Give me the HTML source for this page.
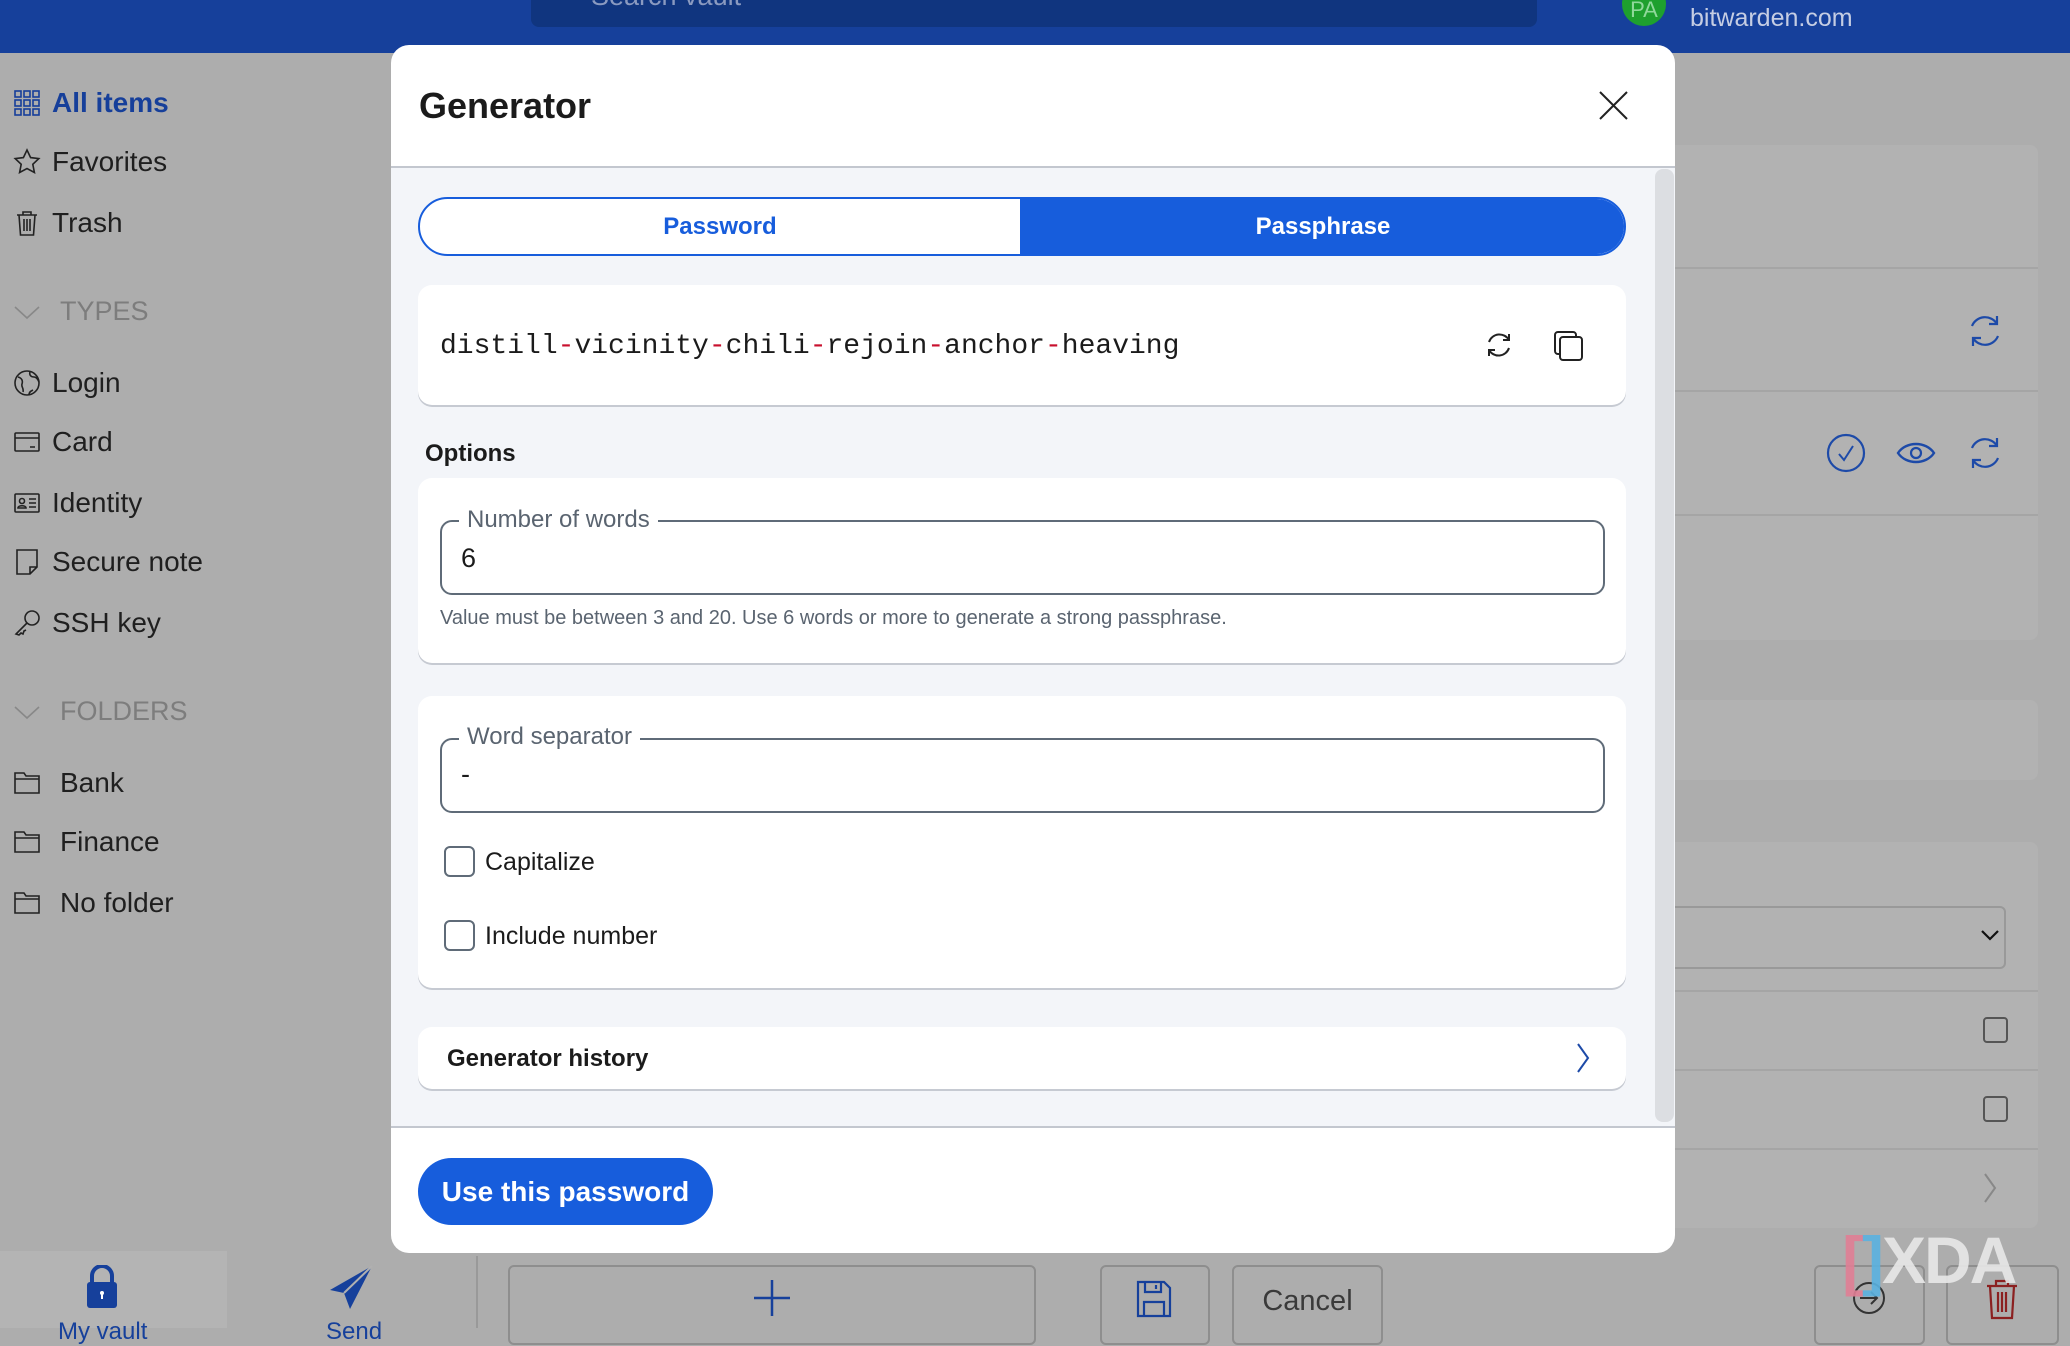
<!DOCTYPE html>
<html><head><meta charset="utf-8"><style>
*{box-sizing:border-box;margin:0;padding:0}
body{width:2070px;height:1328px;overflow:hidden;background:#adadad;font-family:"Liberation Sans",sans-serif;position:relative;color:#1b1b1b}
.a{position:absolute}
.nav{font-size:28px;color:#1f1f1f;display:flex;align-items:center;height:40px;left:12px}
.nav svg{width:30px;height:30px;margin-right:10px;fill:none;stroke:#222;stroke-width:1.6}
.sec{font-size:27px;color:#7d7d7d;left:12px;display:flex;align-items:center}
.card{background:#fff;border-radius:14px;box-shadow:0 2px 0 #c6cad2}
.field{border:2px solid #5f6b78;border-radius:12px;background:#fff}
.lbl{background:#fff;padding:0 8px;font-size:24px;color:#5a6470}
.gc{background:#b2b2b2;border-radius:8px}
.ln{height:2px;background:#a5a5a5}
</style></head><body>
<!-- header -->
<div class="a" style="left:0;top:0;width:2070px;height:53px;background:#16409b"></div>
<div class="a" style="left:531px;top:-10px;width:1006px;height:37px;background:#10357f;border-radius:8px;color:#8a9ac0;font-size:27px;padding-left:60px;line-height:12px">Search vault</div>
<div class="a" style="left:1622px;top:-18px;width:44px;height:44px;border-radius:50%;background:#1ea02e;color:#8fd89a;font-size:22px;text-align:center;line-height:56px">PA</div>
<div class="a" style="left:1690px;top:4px;color:#c5cde3;font-size:25px">bitwarden.com</div>

<!-- sidebar -->
<div class="a nav" style="top:83px;color:#163f9a;font-weight:bold"><svg viewBox="0 0 30 30" style="stroke:#163f9a"><rect x="3" y="3" width="6" height="6"/><rect x="12" y="3" width="6" height="6"/><rect x="21" y="3" width="6" height="6"/><rect x="3" y="12" width="6" height="6"/><rect x="12" y="12" width="6" height="6"/><rect x="21" y="12" width="6" height="6"/><rect x="3" y="21" width="6" height="6"/><rect x="12" y="21" width="6" height="6"/><rect x="21" y="21" width="6" height="6"/></svg>All items</div>
<div class="a nav" style="top:142px"><svg viewBox="0 0 30 30"><path d="M15 3l3.6 7.6 8.2 1-6 5.7 1.6 8.2L15 21.5l-7.4 4 1.6-8.2-6-5.7 8.2-1z"/></svg>Favorites</div>
<div class="a nav" style="top:203px"><svg viewBox="0 0 30 30"><path d="M5 7h20M11 7V4h8v3M7 7l1.5 20h13L23 7M12 11v12M15 11v12M18 11v12"/></svg>Trash</div>
<div class="a sec" style="top:296px"><svg width="30" height="30" viewBox="0 0 30 30" style="margin-right:18px"><path d="M3 10l12 11 12-11" fill="none" stroke="#888" stroke-width="1.6"/></svg>TYPES</div>
<div class="a nav" style="top:363px"><svg viewBox="0 0 30 30"><circle cx="15" cy="15" r="12"/><path d="M6 9c4 1 5 4 4 7s2 4 1 8M18 4c-1 3 1 5 4 5s4 3 5 5M17 27c0-3 2-4 4-5"/></svg>Login</div>
<div class="a nav" style="top:422px"><svg viewBox="0 0 30 30"><rect x="3" y="6" width="24" height="18" rx="1"/><path d="M3 11h24M18 20h5"/></svg>Card</div>
<div class="a nav" style="top:483px"><svg viewBox="0 0 30 30"><rect x="3" y="6" width="24" height="18" rx="1"/><circle cx="10" cy="13" r="2.5"/><path d="M6 20c0-3 8-3 8 0zM17 11h7M17 15h7M17 19h7"/></svg>Identity</div>
<div class="a nav" style="top:542px"><svg viewBox="0 0 30 30"><path d="M5 3h20v17l-7 7H5zM25 20h-7v7"/></svg>Secure note</div>
<div class="a nav" style="top:603px"><svg viewBox="0 0 30 30"><circle cx="20" cy="10" r="7"/><path d="M15 15L4 26l3 1 2-2 2 1 1-3 2-1"/></svg>SSH key</div>
<div class="a sec" style="top:696px"><svg width="30" height="30" viewBox="0 0 30 30" style="margin-right:18px"><path d="M3 10l12 11 12-11" fill="none" stroke="#888" stroke-width="1.6"/></svg>FOLDERS</div>
<div class="a nav" style="top:763px"><svg viewBox="0 0 30 30" style="margin-right:18px"><path d="M3 5h9l2 3h13v17H3zM3 11h24"/></svg>Bank</div>
<div class="a nav" style="top:822px"><svg viewBox="0 0 30 30" style="margin-right:18px"><path d="M3 5h9l2 3h13v17H3zM3 11h24"/></svg>Finance</div>
<div class="a nav" style="top:883px"><svg viewBox="0 0 30 30" style="margin-right:18px"><path d="M3 5h9l2 3h13v17H3zM3 11h24"/></svg>No folder</div>

<!-- bottom bar -->
<div class="a" style="left:0;top:1251px;width:227px;height:77px;background:#b4b4b4"></div>
<svg class="a" style="left:84px;top:1265px" width="36" height="44" viewBox="0 0 36 44"><path d="M8 18V11a10 10 0 0 1 20 0v7" fill="none" stroke="#16409b" stroke-width="4"/><rect x="3" y="17" width="30" height="26" rx="3" fill="#16409b"/><circle cx="18" cy="28" r="2" fill="#fff"/><rect x="17" y="28" width="2" height="6" fill="#fff"/></svg>
<div class="a" style="left:58px;top:1318px;font-size:24px;color:#16409b">My vault</div>
<svg class="a" style="left:328px;top:1264px" width="46" height="46" viewBox="0 0 46 46"><path d="M44 2L2 26l14 3 6 16z" fill="#16409b"/><path d="M44 2L16 29" stroke="#b0b0b0" stroke-width="2"/></svg>
<div class="a" style="left:326px;top:1318px;font-size:24px;color:#16409b">Send</div>
<div class="a" style="left:476px;top:1256px;width:2px;height:72px;background:#999"></div>
<div class="a" style="left:508px;top:1265px;width:528px;height:80px;border:2px solid #8e8e8e;border-radius:6px"></div>
<svg class="a" style="left:752px;top:1278px" width="40" height="40"><path d="M20 2v36M2 20h36" stroke="#16409b" stroke-width="2.5"/></svg>
<div class="a" style="left:1100px;top:1265px;width:110px;height:80px;border:2px solid #8e8e8e;border-radius:6px"></div>
<svg class="a" style="left:1136px;top:1280px" width="36" height="38" viewBox="0 0 36 38"><path d="M2 2h26l6 6v28H2zM9 2v10h16V2M20 5v4M8 36V22h20v14" fill="none" stroke="#16409b" stroke-width="2.2"/></svg>
<div class="a" style="left:1232px;top:1265px;width:151px;height:80px;border:2px solid #8e8e8e;border-radius:6px;font-size:29px;color:#3a3a3a;text-align:center;padding-top:18px">Cancel</div>
<div class="a" style="left:1814px;top:1265px;width:111px;height:80px;border:2px solid #8e8e8e;border-radius:6px"></div>
<svg class="a" style="left:1852px;top:1281px" width="34" height="34"><circle cx="17" cy="17" r="15" fill="none" stroke="#333" stroke-width="2"/><path d="M8 17h17M19 11l6 6-6 6" fill="none" stroke="#333" stroke-width="2"/></svg>
<div class="a" style="left:1946px;top:1265px;width:113px;height:80px;border:2px solid #8e8e8e;border-radius:6px"></div>
<svg class="a" style="left:1985px;top:1278px" width="34" height="42" viewBox="0 0 34 42"><path d="M2 8h30M11 8V3h12v5M5 8l2 32h20l2-32M13 14v20M17 14v20M21 14v20" fill="none" stroke="#8b2020" stroke-width="2.2"/></svg>
<div class="a" style="left:1842px;top:1222px;font-size:66px;font-weight:bold;color:#e8e8e8;letter-spacing:-2px;opacity:.9"><span style="color:#e07f95">[</span><span style="color:#5ab2e0">]</span>XDA</div>

<!-- right bg cards -->
<div class="a gc" style="left:1660px;top:145px;width:378px;height:495px"></div>
<div class="a ln" style="left:1660px;top:267px;width:378px"></div>
<div class="a ln" style="left:1660px;top:390px;width:378px"></div>
<div class="a ln" style="left:1660px;top:514px;width:378px"></div>
<svg class="a" style="left:1966px;top:312px" width="38" height="38" viewBox="0 0 38 38"><path d="M31 12A14 14 0 0 0 6 14M7 26a14 14 0 0 0 25-2M31 4v8h-8M7 34v-8h8" fill="none" stroke="#1d4aa8" stroke-width="2.2"/></svg>
<svg class="a" style="left:1966px;top:434px" width="38" height="38" viewBox="0 0 38 38"><path d="M31 12A14 14 0 0 0 6 14M7 26a14 14 0 0 0 25-2M31 4v8h-8M7 34v-8h8" fill="none" stroke="#1d4aa8" stroke-width="2.2"/></svg>
<svg class="a" style="left:1826px;top:433px" width="40" height="40"><circle cx="20" cy="20" r="18" fill="none" stroke="#1d4aa8" stroke-width="2.2"/><path d="M13 21l5 6 9-14" fill="none" stroke="#1d4aa8" stroke-width="2"/></svg>
<svg class="a" style="left:1896px;top:438px" width="40" height="30"><path d="M2 15C10 3 30 3 38 15 30 27 10 27 2 15z" fill="none" stroke="#1d4aa8" stroke-width="2.4"/><circle cx="20" cy="15" r="5" fill="none" stroke="#1d4aa8" stroke-width="2.2"/></svg>
<div class="a gc" style="left:1660px;top:700px;width:378px;height:80px"></div>
<div class="a gc" style="left:1660px;top:842px;width:378px;height:386px"></div>
<div class="a" style="left:1660px;top:906px;width:346px;height:63px;border:2px solid #999;border-radius:6px"></div>
<svg class="a" style="left:1980px;top:928px" width="20" height="14"><path d="M2 3l8 8 8-8" fill="none" stroke="#111" stroke-width="2.2"/></svg>
<div class="a ln" style="left:1660px;top:990px;width:378px"></div>
<div class="a ln" style="left:1660px;top:1069px;width:378px"></div>
<div class="a ln" style="left:1660px;top:1148px;width:378px"></div>
<div class="a" style="left:1983px;top:1017px;width:25px;height:26px;border:2px solid #555;border-radius:4px"></div>
<div class="a" style="left:1983px;top:1096px;width:25px;height:26px;border:2px solid #555;border-radius:4px"></div>
<svg class="a" style="left:1982px;top:1172px" width="16" height="32"><path d="M3 2l10 14L3 30" fill="none" stroke="#888" stroke-width="2"/></svg>

<!-- modal -->
<div class="a" style="left:391px;top:45px;width:1284px;height:1208px;background:#fff;border-radius:18px;overflow:hidden">
  <div class="a" style="left:28px;top:40px;font-size:36px;font-weight:bold;color:#1b1b1b">Generator</div>
  <svg class="a" style="left:1207px;top:45px" width="31" height="31"><path d="M2 2l27 27M29 2L2 29" stroke="#222" stroke-width="2"/></svg>
  <div class="a" style="left:0;top:121px;width:1284px;height:2px;background:#c3c7cf"></div>
  <div class="a" style="left:0;top:123px;width:1284px;height:958px;background:#f3f5f9"></div>
  <div class="a" style="left:1264px;top:124px;width:19px;height:953px;background:#dcdee2;border-radius:8px"></div>
  <div class="a" style="left:0;top:1081px;width:1284px;height:2px;background:#c3c7cf"></div>

  <div class="a" style="left:27px;top:152px;width:1208px;height:59px;border:2px solid #175ddc;border-radius:30px;overflow:hidden;background:#fff">
    <div class="a" style="left:0;top:0;width:600px;height:55px;text-align:center;line-height:55px;font-size:24px;font-weight:bold;color:#175ddc">Password</div>
    <div class="a" style="left:600px;top:0;width:606px;height:55px;background:#175ddc;text-align:center;line-height:55px;font-size:24px;font-weight:bold;color:#fff">Passphrase</div>
  </div>

  <div class="a card" style="left:27px;top:240px;width:1208px;height:120px"></div>
  <div class="a" style="left:49px;top:286px;font-family:'Liberation Mono',monospace;font-size:28px;color:#1b1b1b;white-space:pre">distill<span style="color:#c8102e">-</span>vicinity<span style="color:#c8102e">-</span>chili<span style="color:#c8102e">-</span>rejoin<span style="color:#c8102e">-</span>anchor<span style="color:#c8102e">-</span>heaving</div>
  <svg class="a" style="left:1093px;top:285px" width="30" height="30" viewBox="0 0 30 30"><path d="M25 10A11 11 0 0 0 5 12M5 20a11 11 0 0 0 20-2M25 4v6h-6M5 26v-6h6" fill="none" stroke="#222" stroke-width="2"/></svg>
  <svg class="a" style="left:1162px;top:285px" width="32" height="32" viewBox="0 0 32 32"><rect x="2" y="2" width="21" height="22" rx="3" fill="none" stroke="#222" stroke-width="2"/><rect x="7" y="7" width="22" height="23" rx="3" fill="#fff" stroke="#222" stroke-width="2"/></svg>

  <div class="a" style="left:34px;top:395px;font-size:24px;font-weight:bold">Options</div>

  <div class="a card" style="left:27px;top:433px;width:1208px;height:185px"></div>
  <div class="a field" style="left:49px;top:475px;width:1165px;height:75px"></div>
  <div class="a lbl" style="left:68px;top:461px">Number of words</div>
  <div class="a" style="left:70px;top:498px;font-size:27px">6</div>
  <div class="a" style="left:49px;top:562px;font-size:20px;color:#5a6470">Value must be between 3 and 20. Use 6 words or more to generate a strong passphrase.</div>

  <div class="a card" style="left:27px;top:651px;width:1208px;height:292px"></div>
  <div class="a field" style="left:49px;top:693px;width:1165px;height:75px"></div>
  <div class="a lbl" style="left:68px;top:678px">Word separator</div>
  <div class="a" style="left:70px;top:714px;font-size:27px">-</div>
  <div class="a" style="left:53px;top:801px;width:31px;height:31px;border:2px solid #5f6b78;border-radius:6px;background:#fff"></div>
  <div class="a" style="left:94px;top:803px;font-size:25px">Capitalize</div>
  <div class="a" style="left:53px;top:875px;width:31px;height:31px;border:2px solid #5f6b78;border-radius:6px;background:#fff"></div>
  <div class="a" style="left:94px;top:877px;font-size:25px">Include number</div>

  <div class="a card" style="left:27px;top:982px;width:1208px;height:62px"></div>
  <div class="a" style="left:56px;top:1000px;font-size:24px;font-weight:bold">Generator history</div>
  <svg class="a" style="left:1184px;top:997px" width="16" height="32"><path d="M3 2l10 14L3 30" fill="none" stroke="#1d4aa8" stroke-width="2"/></svg>

  <div class="a" style="left:27px;top:1113px;width:295px;height:67px;background:#175ddc;border-radius:34px;color:#fff;font-size:28px;font-weight:bold;text-align:center;line-height:67px">Use this password</div>
</div>
</body></html>
